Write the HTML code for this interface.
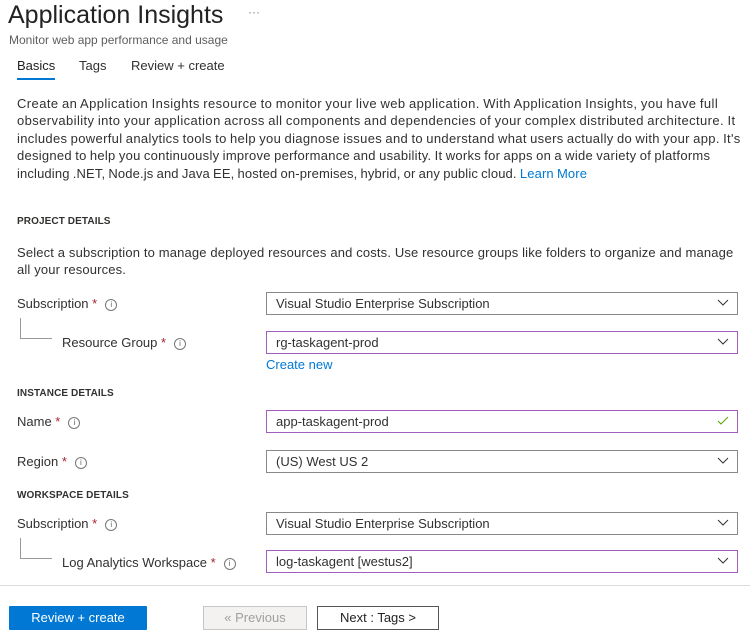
<!DOCTYPE html><html><head><style>
body{margin:0;width:750px;height:641px;background:#fff;font-family:"Liberation Sans",sans-serif;color:#323130;position:relative;overflow:hidden}
.a{position:absolute;white-space:nowrap}
.t{font-size:13px}
.para{word-spacing:-0.6px}
.h{font-size:10px;font-weight:bold;letter-spacing:0.1px}
.st{color:#a4262c}
.i{display:inline-block;width:10px;height:10px;border:1px solid #777;border-radius:50%;font-size:8px;text-align:center;line-height:10px;color:#666;vertical-align:middle;margin-left:8px}
.dd{position:absolute;left:266px;width:461px;height:21px;border:1px solid #8a8886;font-size:13px;line-height:21px;padding-left:9px;box-sizing:content-box}
.p{border-color:#a05ec0}
.ch{position:absolute;right:8px;top:6px}
</style></head><body>
<div class="a" style="left:8px;top:1px;font-size:25px;color:#222">Application Insights</div>
<div class="a" style="left:248px;top:5px;font-size:12px;color:#888">···</div>
<div class="a" style="left:9px;top:33px;font-size:12px;color:#605e5c">Monitor web app performance and usage</div>
<div class="a t" style="left:17px;top:58px;color:#222">Basics</div>
<div class="a" style="left:17px;top:78px;width:38px;height:2px;background:#0078d4"></div>
<div class="a t" style="left:79px;top:58px">Tags</div>
<div class="a t" style="left:131px;top:58px">Review + create</div>
<div class="a t para" style="left:17px;top:95px;line-height:17.4px"><span style="letter-spacing:0.42px">Create an Application Insights resource to monitor your live web application. With Application Insights, you have full</span><br><span style="letter-spacing:0.4px">observability into your application across all components and dependencies of your complex distributed architecture. It</span><br><span style="letter-spacing:0.33px">includes powerful analytics tools to help you diagnose issues and to understand what users actually do with your app. It's</span><br><span style="letter-spacing:0.27px">designed to help you continuously improve performance and usability. It works for apps on a wide variety of platforms</span><br><span style="letter-spacing:0.14px">including .NET, Node.js and Java EE, hosted on-premises, hybrid, or any public cloud. <span style="color:#0078d4">Learn More</span></span></div>
<div class="a h" style="left:17px;top:216px">PROJECT DETAILS</div>
<div class="a t" style="left:17px;top:244px;line-height:17.4px;letter-spacing:0.15px">Select a subscription to manage deployed resources and costs. Use resource groups like folders to organize and manage<br>all your resources.</div>
<div class="a t" style="left:17px;top:296px">Subscription <span class="st">*</span><span class="i">i</span></div>
<div class="a" style="left:20px;top:318px;width:1px;height:20px;background:#999"></div>
<div class="a" style="left:20px;top:338px;width:32px;height:1px;background:#999"></div>
<div class="a t" style="left:62px;top:335px">Resource Group <span class="st">*</span><span class="i">i</span></div>
<div class="dd" style="top:292px">Visual Studio Enterprise Subscription<svg class="ch" width="12" height="8"><path d="M1 1l5 5 5-5" stroke="#333" fill="none"/></svg></div>
<div class="dd p" style="top:331px">rg-taskagent-prod<svg class="ch" width="12" height="8"><path d="M1 1l5 5 5-5" stroke="#333" fill="none"/></svg></div>
<div class="a t" style="left:266px;top:357px;color:#0078d4">Create new</div>
<div class="a h" style="left:17px;top:388px">INSTANCE DETAILS</div>
<div class="a t" style="left:17px;top:414px">Name <span class="st">*</span><span class="i">i</span></div>
<div class="dd p" style="top:410px">app-taskagent-prod<svg class="ch" style="top:5px" width="12" height="10"><path d="M1 5l3 3 7-7" stroke="#57a300" fill="none"/></svg></div>
<div class="a t" style="left:17px;top:454px">Region <span class="st">*</span><span class="i">i</span></div>
<div class="dd" style="top:450px">(US) West US 2<svg class="ch" width="12" height="8"><path d="M1 1l5 5 5-5" stroke="#333" fill="none"/></svg></div>
<div class="a h" style="left:17px;top:490px">WORKSPACE DETAILS</div>
<div class="a t" style="left:17px;top:516px">Subscription <span class="st">*</span><span class="i">i</span></div>
<div class="a" style="left:20px;top:538px;width:1px;height:20px;background:#999"></div>
<div class="a" style="left:20px;top:558px;width:32px;height:1px;background:#999"></div>
<div class="a t" style="left:62px;top:555px">Log Analytics Workspace <span class="st">*</span><span class="i">i</span></div>
<div class="dd" style="top:512px">Visual Studio Enterprise Subscription<svg class="ch" width="12" height="8"><path d="M1 1l5 5 5-5" stroke="#333" fill="none"/></svg></div>
<div class="dd p" style="top:550px">log-taskagent [westus2]<svg class="ch" width="12" height="8"><path d="M1 1l5 5 5-5" stroke="#333" fill="none"/></svg></div>
<div class="a" style="left:0;top:585px;width:750px;height:1px;background:#ddd"></div>
<div class="a t" style="left:9px;top:606px;width:138px;height:24px;background:#0078d4;color:#fff;text-align:center;line-height:24px;border-radius:1px">Review + create</div>
<div class="a t" style="left:203px;top:606px;width:102px;height:22px;border:1px solid #c8c6c4;background:#f3f2f1;color:#a19f9d;text-align:center;line-height:22px">« Previous</div>
<div class="a t" style="left:317px;top:606px;width:120px;height:22px;border:1px solid #555;color:#222;text-align:center;line-height:22px">Next : Tags &gt;</div>
</body></html>
